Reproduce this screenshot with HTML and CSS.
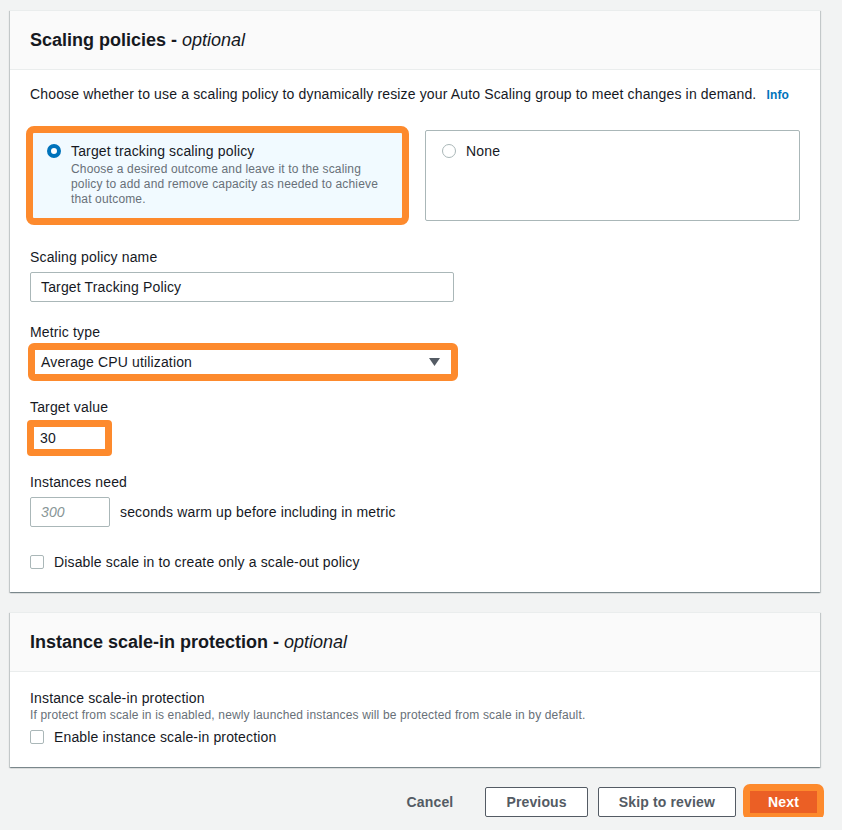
FILE: index.html
```html
<!DOCTYPE html>
<html lang="en">
<head>
<meta charset="utf-8">
<title>Scaling policies</title>
<link rel="stylesheet" href="styles.css">
</head>
<body>
<section class="card">
  <header class="card-header">
    <h2 class="card-title">Scaling policies - <i class="optional">optional</i></h2>
  </header>
  <div class="card-body">
    <p class="intro">Choose whether to use a scaling policy to dynamically resize your Auto Scaling group to meet changes in demand. <a class="info" href="#">Info</a></p>
    <div class="tiles">
      <div class="tile tile-selected annotated">
        <span class="radio radio-checked"></span>
        <div class="tile-text">
          <div class="tile-title">Target tracking scaling policy</div>
          <div class="tile-desc">Choose a desired outcome and leave it to the scaling policy to add and remove capacity as needed to achieve that outcome.</div>
        </div>
      </div>
      <div class="tile">
        <span class="radio"></span>
        <div class="tile-text">
          <div class="tile-title">None</div>
        </div>
      </div>
    </div>

    <div class="field field-name">
      <div class="label">Scaling policy name</div>
      <div class="input input-wide">Target Tracking Policy</div>
    </div>

    <div class="field field-metric">
      <div class="label">Metric type</div>
      <div class="select annotated-wide">
        <span>Average CPU utilization</span>
        <svg class="caret" width="11" height="8" viewBox="0 0 11 8"><path d="M0 0H11L5.5 8Z" fill="#545b64"/></svg>
      </div>
    </div>

    <div class="field field-target">
      <div class="label">Target value</div>
      <div class="input input-target annotated-wide">30</div>
    </div>

    <div class="field field-warm">
      <div class="label">Instances need</div>
      <div class="warm-row">
        <div class="input input-small placeholder">300</div>
        <span class="warm-text">seconds warm up before including in metric</span>
      </div>
    </div>

    <div class="check-row">
      <span class="checkbox"></span>
      <span>Disable scale in to create only a scale-out policy</span>
    </div>
  </div>
</section>

<section class="card card-second">
  <header class="card-header">
    <h2 class="card-title">Instance scale-in protection - <i class="optional">optional</i></h2>
  </header>
  <div class="card-body card-body-second">
    <div class="label">Instance scale-in protection</div>
    <div class="desc">If protect from scale in is enabled, newly launched instances will be protected from scale in by default.</div>
    <div class="check-row check-row-tight">
      <span class="checkbox"></span>
      <span>Enable instance scale-in protection</span>
    </div>
  </div>
</section>

<div class="actions">
  <button class="btn btn-link">Cancel</button>
  <button class="btn btn-normal">Previous</button>
  <button class="btn btn-normal">Skip to review</button>
  <button class="btn btn-primary">Next</button>
</div>
</body>
</html>
```

FILE: styles.css
```css
* { box-sizing: border-box; }

html, body {
  margin: 0;
  background: #f2f3f3;
}

body {
  padding: 10px 22px 0 10px;
  font-family: "Liberation Sans", Arial, sans-serif;
  font-size: 14px;
  line-height: 20px;
  letter-spacing: 0.15px;
  color: #16191f;
}

.card {
  background: #fff;
  border-top: 1px solid #eaeded;
  box-shadow: 0 1px 1px 0 rgba(0, 28, 36, 0.3), 1px 1px 1px 0 rgba(0, 28, 36, 0.15), -1px 1px 1px 0 rgba(0, 28, 36, 0.15);
}

.card-second {
  margin-top: 20px;
}

.card-header {
  height: 59px;
  background: #fafafa;
  border-bottom: 1px solid #eaeded;
  display: flex;
  align-items: center;
  padding: 0 20px;
}

.card-title {
  margin: 0;
  font-size: 18px;
  line-height: 22px;
  font-weight: 700;
  letter-spacing: 0;
  color: #16191f;
}

.optional {
  font-weight: 400;
}

.card-body {
  padding: 14px 20px 20px;
}

.card-body-second {
  padding-top: 16px;
}

.intro {
  margin: 0;
}

.info {
  margin-left: 6px;
  color: #0073bb;
  font-weight: 700;
  font-size: 12px;
  text-decoration: none;
}

.tiles {
  margin-top: 25px;
  display: grid;
  grid-template-columns: 375px 375px;
  column-gap: 20px;
}

.tile {
  height: 91px;
  border: 1px solid #aab7b8;
  border-radius: 2px;
  padding: 10px 16px;
  display: flex;
  align-items: flex-start;
  gap: 10px;
  background: #fff;
}

.tile-selected {
  background: #f1faff;
  border-color: #00a1c9;
}

.annotated {
  outline: 7px solid #fd8a2d;
  outline-offset: -3px;
  border-radius: 4px;
}

.annotated-wide {
  outline: 7px solid #fd8a2d;
  outline-offset: -5px;
  border-radius: 4px;
}

.radio {
  flex: none;
  width: 14px;
  height: 14px;
  margin-top: 3px;
  border-radius: 50%;
  border: 1.5px solid #aab7b8;
  background: #fff;
}

.radio-checked {
  border: 4px solid #0073bb;
}

.tile-title {
  color: #16191f;
}

.tile-desc {
  margin-top: 1px;
  font-size: 12px;
  line-height: 15px;
  color: #687078;
}

.field {
  margin-bottom: 20px;
}

.tiles + .field {
  margin-top: 26px;
}

.field-metric,
.field-target {
  margin-bottom: 18px;
}

.field-warm {
  margin-bottom: 25px;
}

.label {
  margin-bottom: 5px;
  color: #16191f;
}

.card-body-second .label {
  margin-bottom: 0;
}

.input {
  height: 30px;
  border: 1px solid #aab7b8;
  border-radius: 2px;
  padding: 0 10px;
  display: flex;
  align-items: center;
  background: #fff;
}

.input-wide {
  width: 424px;
}

.input-target {
  width: 81px;
  height: 32px;
  margin-left: -1px;
}

.input-small {
  width: 80px;
}

.placeholder {
  color: #879596;
  font-style: italic;
}

.select {
  width: 426px;
  height: 34px;
  margin-top: -2px;
  border: 1px solid #aab7b8;
  padding: 0 15px 0 10px;
  display: flex;
  align-items: center;
  justify-content: space-between;
  background: #fff;
}

.caret {
  display: block;
}

.warm-row {
  display: flex;
  align-items: center;
  gap: 10px;
}

.check-row {
  display: flex;
  align-items: center;
  gap: 10px;
}

.check-row-tight {
  margin-top: 4px;
}

.checkbox {
  flex: none;
  width: 14px;
  height: 14px;
  border: 1px solid #aab7b8;
  border-radius: 2px;
  background: #fff;
}

.desc {
  font-size: 12px;
  line-height: 15px;
  color: #687078;
}

.actions {
  margin-top: 20px;
  display: flex;
  justify-content: flex-end;
  align-items: center;
  gap: 10px;
  margin-right: -1px;
}

.btn {
  height: 30px;
  font-family: "Liberation Sans", Arial, sans-serif;
  font-size: 14px;
  font-weight: 700;
  letter-spacing: 0.15px;
  border-radius: 2px;
  padding: 0 20px;
  cursor: pointer;
}

.btn-link {
  background: transparent;
  border: 1px solid transparent;
  color: #545b64;
  margin-right: 1px;
}

.btn-normal {
  background: #fff;
  border: 1px solid #545b64;
  color: #545b64;
}

.btn-primary {
  background: #eb5f25;
  border: 1px solid #eb5f25;
  color: #fff;
  width: 75px;
  padding: 0;
  outline: 7px solid #fd8a2d;
  outline-offset: -4px;
  border-radius: 4px;
}
```
